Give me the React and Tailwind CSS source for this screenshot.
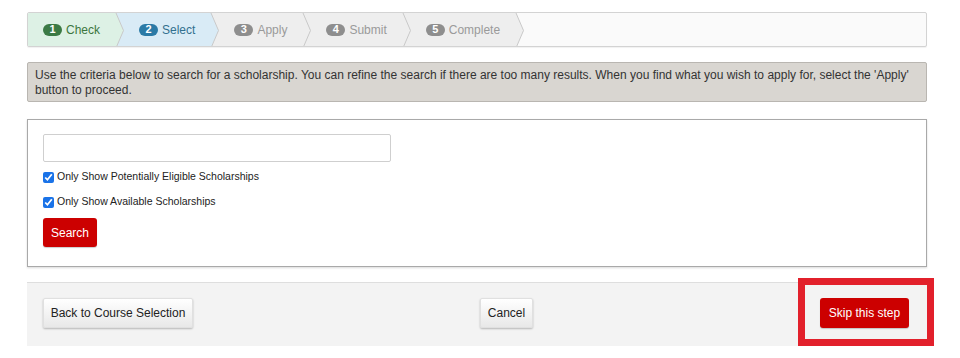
import { useState } from "react";

const steps = [
  { n: 1, label: "Check", bg: "#ddf1e5", badge: "bg-[#3b7a45]", text: "text-[#3c763d]" },
  { n: 2, label: "Select", bg: "#d9ebf6", badge: "bg-[#2b7aa6]", text: "text-[#31708f]" },
  { n: 3, label: "Apply", bg: "#eeeeee", badge: "bg-[#8e8e8e]", text: "text-[#9a9a9a]" },
  { n: 4, label: "Submit", bg: "#eeeeee", badge: "bg-[#8e8e8e]", text: "text-[#9a9a9a]" },
  { n: 5, label: "Complete", bg: "#eeeeee", badge: "bg-[#8e8e8e]", text: "text-[#9a9a9a]" },
];

function Chevron({ from, to }) {
  return (
    <svg width="9" height="35" viewBox="0 0 9 35" className="shrink-0 block">
      <rect x="0" y="0" width="9" height="35" fill={to} />
      <polygon points="0,0 1,0 8.5,17.5 1,35 0,35" fill={from} />
      <polyline points="1,0 8.5,17.5 1,35" fill="none" stroke="#c9c9c9" strokeWidth="1" />
    </svg>
  );
}

function Stepper() {
  return (
    <div className="flex h-[35px] border border-[#d3d3d3] rounded-[2px] bg-[#fafafa] shadow-[0_1px_1px_rgba(0,0,0,0.06)] overflow-hidden">
      {steps.map((s, i) => (
        <div key={s.n} className="flex items-stretch">
          <div
            className={`flex items-center gap-[4px] pl-[15px] pr-[15px] ${s.text}`}
            style={{ backgroundColor: s.bg }}
          >
            <span
              className={`${s.badge} text-white text-[11px] font-bold leading-none rounded-full w-[19px] h-[12px] flex items-center justify-center`}
            >
              {s.n}
            </span>
            <span className="text-[12px]">{s.label}</span>
          </div>
          <Chevron from={s.bg} to={i < steps.length - 1 ? steps[i + 1].bg : "#fafafa"} />
        </div>
      ))}
    </div>
  );
}

export default function App() {
  const [query, setQuery] = useState("");
  const [eligible, setEligible] = useState(true);
  const [available, setAvailable] = useState(true);

  return (
    <div className="w-[960px] h-[358px] bg-white font-['Liberation_Sans',Arial,sans-serif] text-[#333] relative">
      <div className="ml-[27px] w-[900px] pt-[12px]">
        {/* STEPS */}
        <Stepper />

        {/* INFO */}
        <div className="mt-[15px] h-[40px] bg-[#d9d6d1] border border-[#b9b6b1] rounded-[2px] px-[7px] pt-[5px] text-[12px] leading-[15px] text-[#333]">
          Use the criteria below to search for a scholarship. You can refine the search if there are too many results. When you find what you wish to apply for, select the 'Apply' button to proceed.
        </div>

        {/* SEARCH PANEL */}
        <div className="mt-[17px] h-[148px] border border-[#a9a9a9] bg-white shadow-[0_1px_2px_rgba(0,0,0,0.15)] px-[15px] pt-[14px]">
          <input
            type="text"
            value={query}
            onChange={(e) => setQuery(e.target.value)}
            className="block w-[348px] h-[28px] border border-[#cfcfcf] rounded-[2px] px-2 text-[12px] outline-none"
          />
          <label className="flex items-center gap-[3px] mt-[8px] h-[14px] text-[10.5px] text-[#222]">
            <input
              type="checkbox"
              checked={eligible}
              onChange={() => setEligible(!eligible)}
              className="w-[11px] h-[11px] m-0 accent-[#1a73e8]"
            />
            Only Show Potentially Eligible Scholarships
          </label>
          <label className="flex items-center gap-[3px] mt-[11px] h-[14px] text-[10.5px] text-[#222]">
            <input
              type="checkbox"
              checked={available}
              onChange={() => setAvailable(!available)}
              className="w-[11px] h-[11px] m-0 accent-[#1a73e8]"
            />
            Only Show Available Scholarships
          </label>
          <button
            type="button"
            className="mt-[9px] h-[29px] px-[8px] bg-[#cc0000] text-white text-[12px] rounded-[3px] shadow-[0_1px_1px_rgba(0,0,0,0.2)]"
          >
            Search
          </button>
        </div>

        {/* FOOTER */}
        <div className="mt-[15px] h-[64px] bg-[#f3f3f3] border-t border-[#dedede] flex items-center pl-[16px] pb-[3px]">
          <button
            type="button"
            className="h-[30px] w-[150px] bg-gradient-to-b from-white to-[#e8e8e8] border border-[#e0e0e0] rounded-[2px] shadow-[0_1px_2px_rgba(0,0,0,0.25)] text-[12px] text-[#222]"
          >
            Back to Course Selection
          </button>
          <button
            type="button"
            className="ml-[287px] h-[30px] w-[53px] bg-gradient-to-b from-white to-[#e8e8e8] border border-[#e0e0e0] rounded-[2px] shadow-[0_1px_2px_rgba(0,0,0,0.25)] text-[12px] text-[#222]"
          >
            Cancel
          </button>
          <button
            type="button"
            className="ml-[287px] h-[30px] w-[89px] bg-[#cc0000] rounded-[3px] shadow-[0_1px_1px_rgba(0,0,0,0.2)] text-[12px] text-white"
          >
            Skip this step
          </button>
        </div>
      </div>

      {/* highlight annotation */}
      <div className="absolute left-[798px] top-[278px] w-[136px] h-[68px] border-[7px] border-[#e2202b] pointer-events-none" />
    </div>
  );
}
